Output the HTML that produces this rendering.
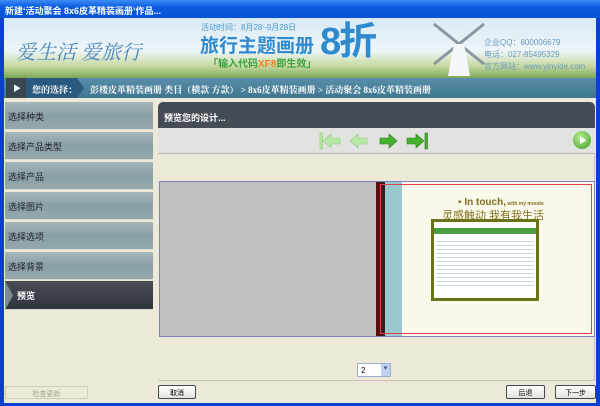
<!DOCTYPE html>
<html><head><meta charset="utf-8"><style>
*{margin:0;padding:0;box-sizing:border-box}
body{width:600px;height:406px;overflow:hidden;background:#0a3fd0;font-family:"Liberation Sans","Noto Sans CJK SC",sans-serif;font-size:9px;position:relative}
.abs{position:absolute}
#title{left:0;top:0;width:600px;height:18px;background:linear-gradient(#3d8cf5,#0a5be0 40%,#0553d6);color:#fff;font-weight:bold;font-size:9px;padding:4px 0 0 5px}
#client{left:4px;top:18px;width:592px;height:385px;background:#ece9d8}
#banner{left:4px;top:18px;width:592px;height:60px;background:linear-gradient(#d8eaf6,#eef5f8 55%,#c6d9a0 80%,#7da858)}
#nav{left:4px;top:78px;width:592px;height:20px;background:linear-gradient(#5a8ea8,#3e7690);color:#fff;font-size:9px;font-family:"Liberation Serif","Noto Serif CJK SC",serif;font-weight:bold}
.side{left:5px;width:148px;height:28px;background:linear-gradient(#a4b6ba,#8aa0a6 50%,#94a8ac);color:#223;font-size:9px;padding:8px 0 0 3px;border-bottom:1px solid #d8dcd4}
</style></head><body>
<div id="title" class="abs">新建‘活动聚会 8x6皮革精装画册’作品...</div>
<div id="client" class="abs"></div>
<div id="banner" class="abs">
 <div class="abs" style="left:12px;top:18px;font-size:20px;color:#4a86b8;font-family:'Noto Serif CJK SC',serif;font-style:italic">爱生活 爱旅行</div>
 <div class="abs" style="left:197px;top:4px;font-size:8px;color:#4a9ad0">活动时间：8月28–9月28日</div>
 <div class="abs" style="left:196px;top:13px;font-size:19px;color:#2f8ad0;font-weight:bold">旅行主题画册</div>
 <div class="abs" style="left:316px;top:3px;font-size:38px;color:#2f8ad0;font-weight:bold;line-height:42px;letter-spacing:-2px">8折</div>
 <div class="abs" style="left:204px;top:37px;font-size:10px;color:#3aa040;font-weight:bold">「输入代码<span style="color:#f08020">XF8</span>即生效」</div>
 <svg class="abs" style="left:420px;top:2px" width="70" height="56"><path d="M10 4L60 44M60 4L10 44" stroke="#8a96a0" stroke-width="3"/><path d="M30 24h10l6 32h-22z" fill="#f4f8fa"/></svg>
 <div class="abs" style="left:480px;top:19px;font-size:8px;color:#6a9ac0;line-height:12px">企业QQ：800006679<br>电话：027-85495329<br>官方网站：www.yinyide.com</div>
</div>
<div id="nav" class="abs">
 <div class="abs" style="left:2px;top:0;width:20px;height:20px;background:#3a4650;color:#fff;padding:5px 0 0 7px;font-size:8px">▶</div>
 <div class="abs" style="left:22px;top:0;width:58px;height:20px;background:#2a5a80;clip-path:polygon(0 0,88% 0,100% 50%,88% 100%,0 100%);padding:5px 0 0 6px">您的选择：</div>
 <div class="abs" style="left:86px;top:5px;white-space:nowrap">彭楼皮革精装画册 类目（横款 方款） &gt; 8x6皮革精装画册 &gt; 活动聚会 8x6皮革精装画册</div>
</div>
<div class="abs side" style="top:102px">选择种类</div>
<div class="abs side" style="top:132px">选择产品类型</div>
<div class="abs side" style="top:162px">选择产品</div>
<div class="abs side" style="top:192px">选择图片</div>
<div class="abs side" style="top:222px">选择选项</div>
<div class="abs side" style="top:252px">选择背景</div>
<div class="abs side" style="top:281px;height:29px;background:linear-gradient(#4a4e58,#30343c);color:#fff;font-weight:bold;padding-left:12px">预览</div>
<div class="abs" style="left:5px;top:281px;width:8px;height:29px;background:#7a8c96;clip-path:polygon(0 0,100% 50%,0 100%)"></div>
<div class="abs" style="left:158px;top:102px;width:437px;height:26px;background:#464c56;border-radius:5px 5px 0 0;color:#fff;font-weight:bold;font-size:9px;padding:9px 0 0 6px">预览您的设计...</div>
<div class="abs" style="left:158px;top:128px;width:437px;height:26px;background:#e2e2e0;border-bottom:1px solid #b8b8b0"></div>
<svg class="abs" style="left:318px;top:131px" width="115" height="20">
 <g fill="#b8e8a8" stroke="#90c880" stroke-width="0.6">
  <rect x="2" y="2" width="2.5" height="16"/><path d="M5 10l8-7v4h9v6h-9v4z"/>
  <path d="M32 10l8-7v4h9v6h-9v4z"/>
 </g>
 <g fill="#48b030" stroke="#2a7a18" stroke-width="0.6">
  <path d="M79 10l-8-7v4h-9v6h9v4z"/>
  <path d="M106 10l-8-7v4h-9v6h9v4z"/><rect x="107" y="2" width="2.5" height="16"/>
 </g>
</svg>
<div class="abs" style="left:573px;top:131px;width:18px;height:18px;border-radius:50%;background:radial-gradient(circle at 40% 35%,#b8f090,#3a9a20);color:#fff;font-size:8px;padding:4px 0 0 6px">▶</div>
<div class="abs" style="left:158px;top:154px;width:437px;height:227px;border-right:1px solid #c8c4b8;border-bottom:1px solid #c8c4b8"></div>
<div class="abs" style="left:159px;top:181px;width:436px;height:156px;border:1px solid #8080c0;background:#c0c0c0"></div>
<div class="abs" style="left:376px;top:182px;width:9px;height:154px;background:linear-gradient(90deg,#5a1010,#302020)"></div>
<div class="abs" style="left:385px;top:182px;width:17px;height:154px;background:#98c8cc"></div>
<div class="abs" style="left:402px;top:182px;width:192px;height:154px;background:#fbf9ea"></div>
<div class="abs" style="left:380px;top:184px;width:212px;height:150px;border:1px solid #e04050"></div>
<div class="abs" style="left:458px;top:197px;font-size:10px;color:#807020;font-weight:bold">▪ In touch,<span style="font-size:5px"> with my moods</span></div>
<div class="abs" style="left:442px;top:207px;font-size:11px;color:#807020">灵感触动 我有我生活</div>
<div class="abs" style="left:431px;top:219px;width:108px;height:82px;border:3px solid #6c7218;background:#fff">
 <div style="height:6px;background:#4aa040;margin-top:6px"></div>
 <div style="margin:4px 2px;height:48px;background:repeating-linear-gradient(#fff 0 3px,#c8d4e0 3px 4px)"></div>
</div>
<div class="abs" style="left:357px;top:363px;width:34px;height:14px;background:#fff;border:1px solid #a0b0c8;font-size:8px;padding:2px 0 0 3px">2</div>
<div class="abs" style="left:381px;top:364px;width:9px;height:12px;background:#c0d0f0;color:#405080;font-size:7px;text-align:center">▾</div>
<div class="abs" style="left:5px;top:386px;width:83px;height:13px;border:1px solid #d0ccc0;color:#a8a498;text-align:center;font-size:7px;padding-top:2px">检查更新</div>
<div class="abs" style="left:158px;top:385px;width:38px;height:14px;border:1px solid #404850;border-radius:2px;background:linear-gradient(#fff,#e4e2da);text-align:center;font-size:7px;padding-top:2px">取消</div>
<div class="abs" style="left:506px;top:385px;width:39px;height:14px;border:1px solid #404850;border-radius:2px;background:linear-gradient(#fff,#e4e2da);text-align:center;font-size:7px;padding-top:2px">后退</div>
<div class="abs" style="left:555px;top:385px;width:41px;height:14px;border:1px solid #404850;border-radius:2px;background:linear-gradient(#fff,#e4e2da);text-align:center;font-size:7px;padding-top:2px">下一步</div>
</body></html>
